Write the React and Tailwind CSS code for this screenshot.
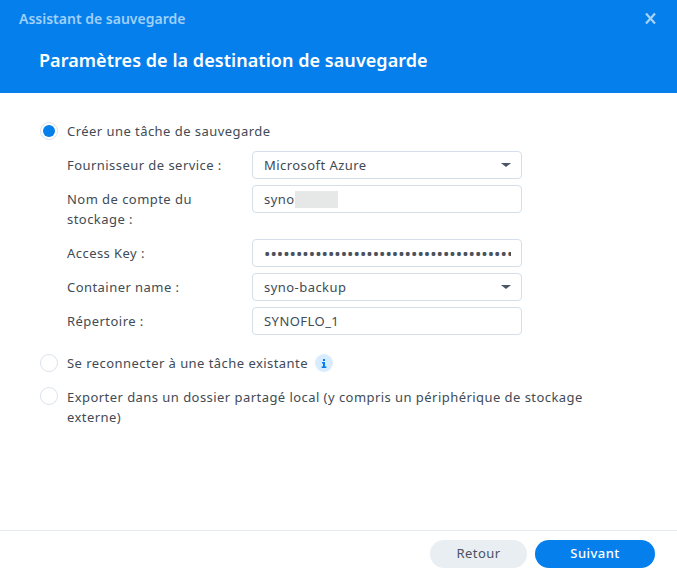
const font = { fontFamily: '"Noto Sans", sans-serif' };

function Radio({ checked }) {
  return (
    <span className={`w-[18px] h-[18px] shrink-0 rounded-full border border-[#dbe3ec] bg-white flex items-center justify-center`}>
      {checked && <span className="w-[12px] h-[12px] rounded-full bg-[#057feb]" />}
    </span>
  );
}

function Caret() {
  return <span className="w-0 h-0 border-l-[5px] border-r-[5px] border-t-[4px] border-l-transparent border-r-transparent border-t-[#4a5568]" />;
}

function Field({ children, caret }) {
  return (
    <div className="w-[270px] h-[28px] shrink-0 rounded-[4px] border border-[#d5dfe9] bg-white pl-[11px] pr-[10px] flex items-center justify-between overflow-hidden">
      <div className="flex items-center min-w-0 overflow-hidden whitespace-nowrap pt-[1px]">{children}</div>
      {caret && <Caret />}
    </div>
  );
}

function Row({ label, children, tall }) {
  return (
    <div className={`flex items-start ${tall ? "h-[48px]" : "h-[28px]"}`}>
      <div className="w-[185px] pr-[12px] leading-[20px] pt-[4px]">{label}</div>
      {children}
    </div>
  );
}

export default function App() {
  return (
    <div style={font} className="w-[677px] h-[576px] bg-white flex flex-col text-[13px] text-[#414b55] overflow-hidden tracking-[0.45px]">
      <header className="h-[93px] shrink-0 bg-[#057feb] pl-[19px] pr-[20px] pt-[9px]">
        <div className="flex justify-between items-center h-[18px]">
          <span className="text-[14px] font-semibold text-[#9fd0fb] tracking-normal">Assistant de sauvegarde</span>
          <svg width="13" height="13" viewBox="0 0 13 13">
            <path d="M2 1.5 L11 11.5 M11 1.5 L2 11.5" stroke="#a8d4fb" strokeWidth="2.2" fill="none" />
          </svg>
        </div>
        <h1 className="mt-[21px] ml-[20px] text-[18px] leading-[24px] font-semibold text-white tracking-[0.05px]">Paramètres de la destination de sauvegarde</h1>
      </header>

      <main className="flex-1 pl-[40px] pt-[28px]">
        <div className="flex items-center gap-[9px] h-[20px]">
          <Radio checked />
          <span className="pt-[1px]">Créer une tâche de sauvegarde</span>
        </div>
        <div className="pl-[27px] mt-[10px] flex flex-col gap-[6px]">
          <Row label="Fournisseur de service :"><Field caret>Microsoft Azure</Field></Row>
          <Row label="Nom de compte du stockage :" tall>
            <Field>
              <span>syno</span>
              <span className="w-[43px] h-[17px] bg-[#e6e8e8]" />
            </Field>
          </Row>
          <Row label="Access Key :">
            <Field>
              <span className="text-[17px] leading-[20px] tracking-normal text-[#4a5260]">{"•".repeat(40)}</span>
            </Field>
          </Row>
          <Row label="Container name :"><Field caret>syno-backup</Field></Row>
          <Row label="Répertoire :"><Field>SYNOFLO_1</Field></Row>
        </div>
        <div className="flex items-center gap-[9px] h-[20px] mt-[18px]">
          <Radio />
          <span className="pt-[1px]">Se reconnecter à une tâche existante</span>
          <span className="w-[18px] h-[18px] -ml-[2px] rounded-full bg-[#d9ecfd] flex items-center justify-center">
            <svg width="6" height="9" viewBox="0 0 6 9">
              <path d="M2 0h2v2H2z M1 3h3v4.6h1.4V9H.6V7.6H2V4.4H1z" fill="#057feb" />
            </svg>
          </span>
        </div>
        <div className="flex items-start gap-[9px] mt-[14px] leading-[20px]">
          <Radio />
          <span className="w-[540px]">Exporter dans un dossier partagé local (y compris un périphérique de stockage externe)</span>
        </div>
      </main>

      <footer className="h-[46px] shrink-0 border-t border-[#e5ebf1] flex justify-end items-start pt-[9px] pr-[22px] gap-[8px]">
        <button className="w-[97px] h-[28px] rounded-full bg-[#e9eef3] text-[#4a5260]">Retour</button>
        <button className="w-[120px] h-[28px] rounded-full bg-[#057feb] text-white font-medium">Suivant</button>
      </footer>
    </div>
  );
}
